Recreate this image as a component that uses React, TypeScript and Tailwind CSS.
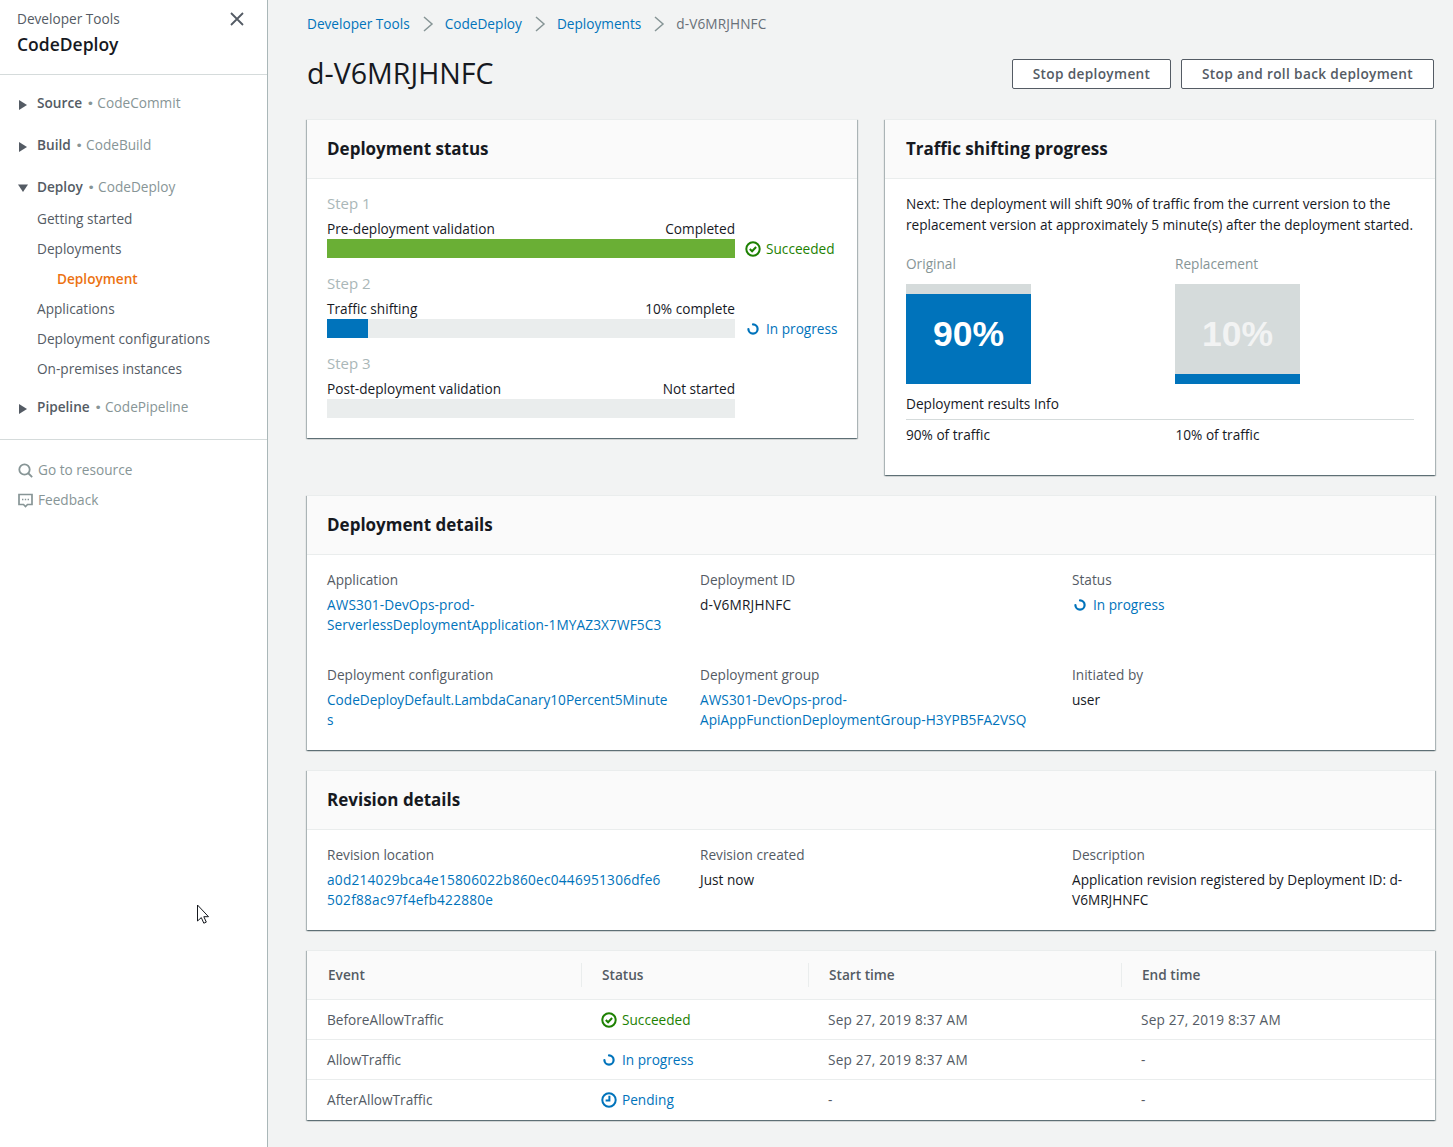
import React from 'react';

const cardClass =
	'bg-white border-t border-[#eaeded] shadow-[0_1px_1px_0_rgba(0,28,36,0.3),1px_1px_1px_0_rgba(0,28,36,0.25),-1px_1px_1px_0_rgba(0,28,36,0.25)]';

const Arrow: React.FC<{ open?: boolean }> = ({ open }) => (
	<svg width="12" height="12" viewBox="0 0 12 12" className={open ? 'mt-[2px]' : 'mt-[3px]'}>
		{open ? (
			<path d="M1 2.5h10L6 10z" fill="#545b64" />
		) : (
			<path d="M2 1l8 5-8 5z" fill="#545b64" />
		)}
	</svg>
);

const Succeeded = () => (
	<div className="flex items-center text-[#1d8102]">
		<svg width="16" height="16" viewBox="0 0 16 16" fill="none" stroke="#1d8102" strokeWidth="2" className="mr-[5px]">
			<circle cx="8" cy="8" r="6.7" />
			<path d="M4.8 8l2.3 2.3 4-4.3" />
		</svg>
		Succeeded
	</div>
);

const InProgress = () => (
	<div className="flex items-center text-[#0073bb]">
		<svg width="16" height="16" viewBox="0 0 16 16" fill="none" stroke="#0073bb" strokeWidth="2.2" strokeLinecap="round" className="mr-[5px]">
			<path d="M8 3.4a4.6 4.6 0 1 1-4.6 4.6" />
		</svg>
		In progress
	</div>
);

const Pending = () => (
	<div className="flex items-center text-[#0073bb]">
		<svg width="16" height="16" viewBox="0 0 16 16" fill="none" stroke="#0073bb" strokeWidth="2" className="mr-[5px]">
			<circle cx="8" cy="8" r="6.7" />
			<path d="M8.4 3.8v4.6H4.6" />
		</svg>
		Pending
	</div>
);

const CardHeader: React.FC<{ title: string; inset?: string }> = ({ title, inset = 'pl-5' }) => (
	<div className={`h-[59px] flex items-center bg-[#fafafa] border-b border-[#eaeded] ${inset}`}>
		<h2 className="text-[17px] font-bold text-[#16191f]">{title}</h2>
	</div>
);

const NavGroup: React.FC<{ name: string; service: string; open?: boolean }> = ({ name, service, open }) => (
	<div className="flex items-center h-5 pl-[17px]">
		<Arrow open={open} />
		<span className="ml-2 font-semibold text-[#545b64]">{name}</span>
		<span className="text-[#879596] ml-[6px]">
			<span className="font-['Liberation_Sans',sans-serif] mr-[1px]">•</span> {service}
		</span>
	</div>
);

const steps = [
	{ step: 'Step 1', name: 'Pre-deployment validation', right: 'Completed', width: '100%', color: 'bg-[#6aaf35]', status: <Succeeded /> },
	{ step: 'Step 2', name: 'Traffic shifting', right: '10% complete', width: '10%', color: 'bg-[#0073bb]', status: <InProgress /> },
	{ step: 'Step 3', name: 'Post-deployment validation', right: 'Not started', width: '0%', color: 'bg-[#0073bb]', status: null },
];

const Field: React.FC<{ label: string; children: React.ReactNode }> = ({ label, children }) => (
	<div>
		<div className="text-[#545b64] h-5 leading-5">{label}</div>
		<div className="mt-[5px]">{children}</div>
	</div>
);

const rows = [
	{ event: 'BeforeAllowTraffic', status: <Succeeded />, start: 'Sep 27, 2019 8:37 AM', end: 'Sep 27, 2019 8:37 AM' },
	{ event: 'AllowTraffic', status: <InProgress />, start: 'Sep 27, 2019 8:37 AM', end: '-' },
	{ event: 'AfterAllowTraffic', status: <Pending />, start: '-', end: '-' },
];

export default function App() {
	return (
		<div className="relative flex h-[1147px] overflow-hidden bg-[#f2f3f3] text-[13.65px] leading-5 text-[#16191f] font-['Open_Sans','Noto_Sans',sans-serif]">
			{/* sidebar */}
			<aside className="w-[268px] shrink-0 bg-white border-r border-[#aab7b8]">
				<div className="h-[75px] border-b border-[#d5dbdb] pl-[17px] pr-[22px] pt-[9px] flex justify-between items-start">
					<div>
						<div className="text-[#545b64] leading-5">Developer Tools</div>
						<div className="text-[17.5px] font-semibold leading-6 mt-[3px]">CodeDeploy</div>
					</div>
					<svg width="16" height="16" viewBox="0 0 16 16" fill="none" stroke="#545b64" strokeWidth="1.8" className="mt-[2px]">
						<path d="M2 2l12 12M14 2L2 14" />
					</svg>
				</div>
				<nav className="pt-[18px]">
					<NavGroup name="Source" service="CodeCommit" />
					<div className="mt-[22px]"><NavGroup name="Build" service="CodeBuild" /></div>
					<div className="mt-[22px]"><NavGroup name="Deploy" service="CodeDeploy" open /></div>
					<ul className="mt-3 pl-[37px] flex flex-col gap-[10px] text-[#545b64]">
						<li>Getting started</li>
						<li>Deployments</li>
						<li className="pl-5 font-semibold text-[#ec7211]">Deployment</li>
						<li>Applications</li>
						<li>Deployment configurations</li>
						<li>On-premises instances</li>
					</ul>
					<div className="mt-[18px]"><NavGroup name="Pipeline" service="CodePipeline" /></div>
				</nav>
				<div className="mt-[22px] border-t border-[#d5dbdb] pt-5 pl-[18px] flex flex-col gap-[10px] text-[#879596]">
					<div className="flex items-center gap-[5px]">
						<svg width="15" height="15" viewBox="0 0 15 15" fill="none" stroke="#879596" strokeWidth="1.8">
							<circle cx="6.5" cy="6.5" r="5.2" />
							<path d="M10 10l4.2 4.2" />
						</svg>
						Go to resource
					</div>
					<div className="flex items-center gap-[5px]">
						<svg width="15" height="15" viewBox="0 0 15 15" fill="none" stroke="#879596" strokeWidth="1.7">
							<path d="M1 1.5h13v10H9.5l-2 2-2-2H1z" />
							<path d="M4 6.5h1.4M6.8 6.5h1.4M9.6 6.5H11" strokeWidth="1.5" />
						</svg>
						Feedback
					</div>
				</div>
			</aside>

			{/* main */}
			<main className="flex-1 pl-[39px] pr-[18px]">
				<div className="h-[48px] flex items-center text-[#0073bb]">
					<span>Developer Tools</span>
					<Chevron />
					<span>CodeDeploy</span>
					<Chevron />
					<span>Deployments</span>
					<Chevron />
					<span className="text-[#687078] tracking-[0.1px]">d-V6MRJHNFC</span>
				</div>
				<div className="h-[41px] mt-[3px] flex items-center justify-between">
					<h1 className="text-[28.6px] leading-9 pt-[2px] text-[#16191f]">d-V6MRJHNFC</h1>
					<div className="flex gap-[10px] mr-[1px] mt-1">
						<Btn label="Stop deployment" width="w-[159px]" />
						<Btn label="Stop and roll back deployment" width="w-[253px]" />
					</div>
				</div>

				<div className="mt-[27px] flex justify-between items-start">
					<section className={`w-[550px] h-[319px] ${cardClass}`}>
						<CardHeader title="Deployment status" />
						<div className="pl-5 pt-[14px] flex flex-col gap-[15px]">
							{steps.map((s) => (
								<div key={s.step}>
									<div className="text-[#aab7b8] text-[15px]">{s.step}</div>
									<div className="mt-[6px] w-[408px] flex justify-between">
										<span>{s.name}</span>
										<span>{s.right}</span>
									</div>
									<div className="h-[19px] flex items-center">
										<div className="w-[408px] h-[19px] bg-[#eaeded]">
											<div className={`h-full ${s.color}`} style={{ width: s.width }} />
										</div>
										<div className="ml-[10px]">{s.status}</div>
									</div>
								</div>
							))}
						</div>
					</section>

					<section className={`w-[550px] h-[356px] ${cardClass}`}>
						<CardHeader title="Traffic shifting progress" inset="pl-[21px]" />
						<div className="pl-[21px] pr-[21px] pt-[14px]">
							<p className="leading-[21px] whitespace-nowrap">
								Next: The deployment will shift 90% of traffic from the current version to the
								<br />
								replacement version at approximately 5 minute(s) after the deployment started.
							</p>
							<div className="mt-[19px] grid grid-cols-[269px_1fr]">
								<TrafficBox label="Original" percent="90%" fill="h-[90px]" textColor="text-white" />
								<TrafficBox label="Replacement" percent="10%" fill="h-[10px]" textColor="text-[#f2f3f3]" />
							</div>
							<div className="mt-[10px] pb-[5px] border-b border-[#d5dbdb]">Deployment results Info</div>
							<div className="mt-[5px] grid grid-cols-[269.5px_1fr]">
								<span>90% of traffic</span>
								<span>10% of traffic</span>
							</div>
						</div>
					</section>
				</div>

				<section className={`mt-5 h-[255px] ${cardClass}`}>
					<CardHeader title="Deployment details" />
					<div className="pl-5 pt-[15px] grid grid-cols-[373px_372px_1fr] gap-y-[30px]">
						<Field label="Application">
							<a className="text-[#0073bb] tracking-[0.1px]">AWS301-DevOps-prod-<br />ServerlessDeploymentApplication-1MYAZ3X7WF5C3</a>
						</Field>
						<Field label="Deployment ID"><span className="tracking-[0.2px]">d-V6MRJHNFC</span></Field>
						<Field label="Status"><InProgress /></Field>
						<Field label="Deployment configuration">
							<a className="text-[#0073bb]">CodeDeployDefault.LambdaCanary10Percent5Minute<br />s</a>
						</Field>
						<Field label="Deployment group">
							<a className="text-[#0073bb] tracking-[0.07px]">AWS301-DevOps-prod-<br />ApiAppFunctionDeploymentGroup-H3YPB5FA2VSQ</a>
						</Field>
						<Field label="Initiated by">user</Field>
					</div>
				</section>

				<section className={`mt-5 h-[160px] ${cardClass}`}>
					<CardHeader title="Revision details" />
					<div className="pl-5 pt-[15px] grid grid-cols-[373px_372px_1fr]">
						<Field label="Revision location">
							<a className="text-[#0073bb] tracking-[0.25px]">a0d214029bca4e15806022b860ec0446951306dfe6<br />502f88ac97f4efb422880e</a>
						</Field>
						<Field label="Revision created">Just now</Field>
						<Field label="Description">
							Application revision registered by Deployment ID: d-<br />V6MRJHNFC
						</Field>
					</div>
				</section>

				<section className={`mt-5 ${cardClass}`}>
					<div className="h-[49px] bg-[#fafafa] border-b border-[#eaeded] grid grid-cols-[274px_227px_313px_1fr] items-center font-semibold text-[#545b64]">
						<div className="pl-[21px]">Event</div>
						<div className="pl-5 h-[24px] leading-6 border-l border-[#eaeded]">Status</div>
						<div className="pl-5 h-[24px] leading-6 border-l border-[#eaeded]">Start time</div>
						<div className="pl-5 h-[24px] leading-6 border-l border-[#eaeded]">End time</div>
					</div>
					{rows.map((r) => (
						<div key={r.event} className="h-10 border-b border-[#eaeded] last:border-b-0 grid grid-cols-[274px_227px_313px_1fr] items-center text-[#545b64]">
							<div className="pl-5">{r.event}</div>
							<div className="pl-5">{r.status}</div>
							<div className="pl-5 tracking-[0.2px]">{r.start}</div>
							<div className="pl-5 tracking-[0.2px]">{r.end}</div>
						</div>
					))}
				</section>
			</main>

			{/* mouse pointer in the capture */}
			<svg width="14" height="21" viewBox="0 0 14 21" className="absolute left-[196px] top-[904px]" fill="#fff" stroke="#16191f" strokeWidth="1">
				<path d="M1.5 1v16l3.8-3.4 2.5 5.6 2.5-1.1-2.5-5.4h4.7z" />
			</svg>
		</div>
	);
}

const Chevron = () => (
	<svg width="12" height="16" viewBox="0 0 12 16" fill="none" stroke="#879596" strokeWidth="1.5" className="ml-[12px] mr-[11px]">
		<path d="M2 1l8 7-8 7" />
	</svg>
);

const Btn: React.FC<{ label: string; width: string }> = ({ label, width }) => (
	<button className={`${width} h-[30px] bg-white border border-[#545b64] rounded-[2px] font-semibold text-[#545b64] tracking-[0.35px]`}>
		{label}
	</button>
);

const TrafficBox: React.FC<{ label: string; percent: string; fill: string; textColor: string }> = ({ label, percent, fill, textColor }) => (
	<div>
		<div className="text-[#879596]">{label}</div>
		<div className="relative mt-[10px] w-[125px] h-[100px] bg-[#d5dbdb] flex flex-col justify-end">
			<div className={`${fill} bg-[#0073bb]`} />
			<span className={`absolute inset-0 flex items-center justify-center font-['Liberation_Sans',sans-serif] font-bold text-[35.5px] ${textColor}`}>
				{percent}
			</span>
		</div>
	</div>
);
